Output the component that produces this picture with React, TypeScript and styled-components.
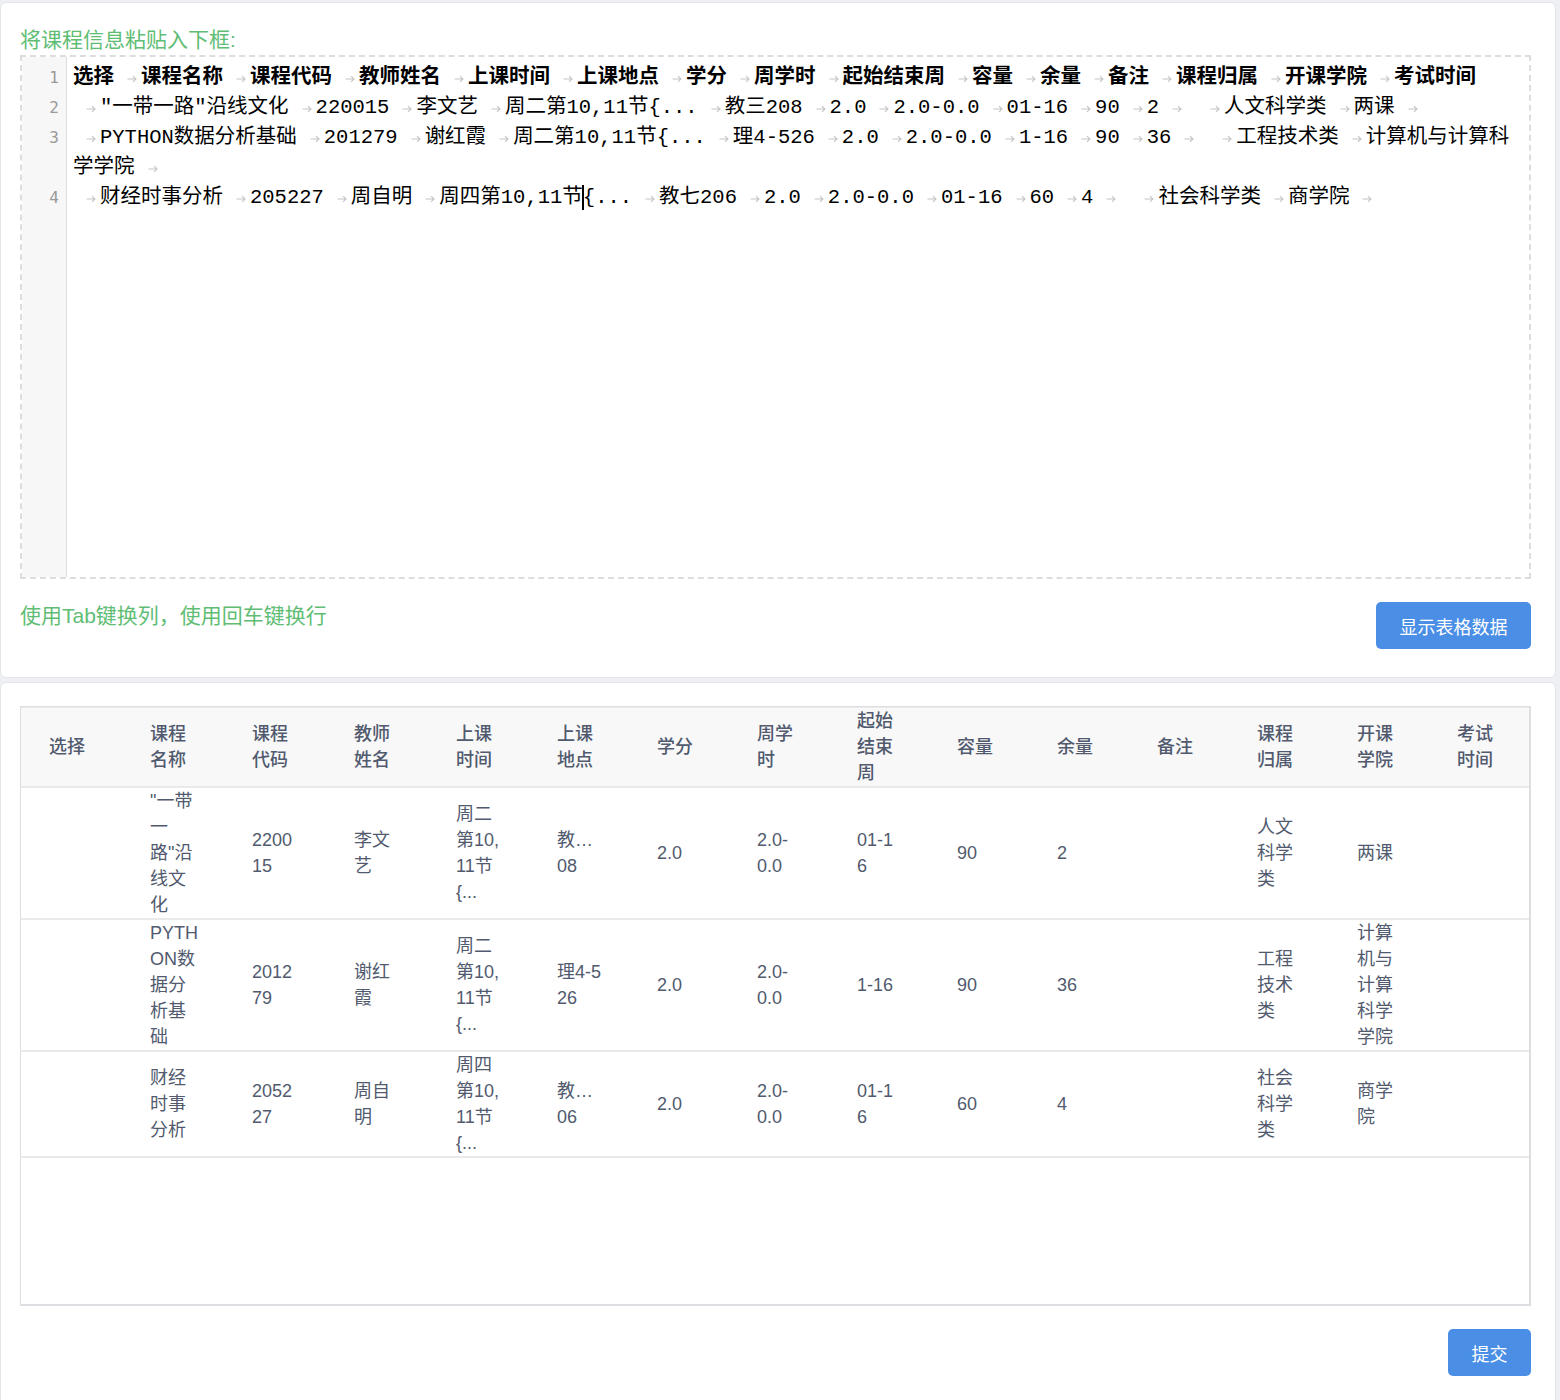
import React from "react";
import styled, { createGlobalStyle } from "styled-components";

const Global = createGlobalStyle`
  html, body { margin: 0; padding: 0; background: #eef0f3; }
  body { font-family: "Liberation Sans", "Noto Sans CJK SC", sans-serif; }
  * { box-sizing: border-box; }
`;

const Page = styled.div`
  padding: 2px 4px 0 0;
  display: flex;
  flex-direction: column;
  gap: 4px;
`;

const Card = styled.section`
  background: #fff;
  border: 1px solid #e4e6ea;
  border-radius: 6px;
  padding: 23px 24px 28px 19px;
`;

const Hint = styled.div`
  color: #5fbd74;
  font-size: 21px;
  line-height: 24px;
  font-family: "Liberation Sans", "Noto Sans CJK SC", sans-serif;
`;

const Label = styled(Hint)`
  margin-top: 2px;
  margin-bottom: 3px;
`;

const Editor = styled.div`
  height: 524px;
  border: 2px dashed #dddddd;
  display: flex;
  overflow: hidden;
`;

const Gutter = styled.div`
  width: 45px;
  flex: none;
  background: #f7f7f7;
  border-right: 1px solid #dddddd;
  padding-top: 6px;
`;

const LineNo = styled.div<{ $rows: number }>`
  height: ${(p) => p.$rows * 30}px;
  line-height: 30px;
  text-align: right;
  padding-right: 7px;
  color: #999;
  font-family: "DejaVu Sans Mono", monospace;
  font-size: 16px;
`;

const Code = styled.div`
  flex: 1;
  padding: 6px 0 0 6px;
  font-family: "Liberation Mono", "Noto Sans CJK SC", monospace;
  font-size: 20.5px;
  color: #000;
`;

const Row = styled.div<{ $bold?: boolean }>`
  height: 30px;
  line-height: 30px;
  white-space: pre;
  font-weight: ${(p) => (p.$bold ? 700 : 400)};
`;

const Tab = styled.span<{ $w: number }>`
  display: inline-flex;
  justify-content: flex-end;
  align-items: center;
  width: ${(p) => p.$w}px;
  height: 30px;
  padding: 2px 4px 0 0;
  vertical-align: top;
  color: #c4c4c4;
`;

const Caret = styled.span`
  display: inline-block;
  width: 2px;
  height: 25px;
  background: #000;
  vertical-align: middle;
  margin: 0 -1px 0 -1px;
`;

const Footer = styled.div<{ $between?: boolean }>`
  margin-top: 23px;
  display: flex;
  justify-content: ${(p) => (p.$between ? "space-between" : "flex-end")};
  align-items: flex-start;
`;

const HelpText = styled(Hint)`
  line-height: 28px;
`;

const Button = styled.button<{ $w: number }>`
  width: ${(p) => p.$w}px;
  height: 47px;
  border: none;
  border-radius: 5px;
  background: #4a8ee6;
  color: #fff;
  font-size: 18px;
  font-family: "Liberation Sans", "Noto Sans CJK SC", sans-serif;
  cursor: pointer;
`;

const TableBox = styled.div`
  height: 600px;
  border: 1px solid #dcdee2;
  border-width: 1px 2px 2px 1px;
  overflow: hidden;
`;

const Table = styled.table`
  width: 100%;
  border-collapse: collapse;
  table-layout: fixed;
  font-family: "Liberation Sans", "Noto Sans CJK SC", sans-serif;
  font-size: 18px;
  line-height: 26px;
  color: #515a6e;
`;

const Col = styled.col<{ $w: number }>`
  width: ${(p) => p.$w}px;
`;

const Th = styled.th`
  background: #f8f8f9;
  height: 79px;
  padding: 0 6px 0 28px;
  text-align: left;
  vertical-align: middle;
  font-weight: 500;
  white-space: nowrap;
  border-top: 1px solid #e8eaec;
  border-bottom: 2px solid #e8eaec;
`;

const Td = styled.td`
  padding: 0 6px 0 28px;
  vertical-align: middle;
  white-space: nowrap;
  border-bottom: 2px solid #e8eaec;
`;

function TabArrow() {
  return (
    <svg width="10" height="8" viewBox="0 0 10 8" fill="none" stroke="currentColor" strokeWidth="1.1">
      <path d="M0.5 4H9M6 1.2L9 4L6 6.8" />
    </svg>
  );
}

type Line = { rows: string[]; bold?: boolean };

const lines: Line[] = [
  {
    bold: true,
    rows: [
      "选择\t课程名称\t课程代码\t教师姓名\t上课时间\t上课地点\t学分\t周学时\t起始结束周\t容量\t余量\t备注\t课程归属\t开课学院\t考试时间",
    ],
  },
  {
    rows: [
      '\t"一带一路"沿线文化\t220015\t李文艺\t周二第10,11节{...\t教三208\t2.0\t2.0-0.0\t01-16\t90\t2\t\t人文科学类\t两课\t',
    ],
  },
  {
    rows: [
      "\tPYTHON数据分析基础\t201279\t谢红霞\t周二第10,11节{...\t理4-526\t2.0\t2.0-0.0\t1-16\t90\t36\t\t工程技术类\t计算机与计算科",
      "学学院\t",
    ],
  },
  {
    rows: [
      "\t财经时事分析\t205227\t周自明\t周四第10,11节|{...\t教七206\t2.0\t2.0-0.0\t01-16\t60\t4\t\t社会科学类\t商学院\t",
    ],
  },
];

function renderRow(text: string) {
  const parts = text.split("\t");
  const out: React.ReactNode[] = [];
  parts.forEach((seg, i) => {
    if (i > 0) {
      const prevEmpty = parts[i - 1] === "" && i - 1 > 0;
      out.push(
        <Tab key={`t${i}`} $w={prevEmpty ? 38 : 27}>
          <TabArrow />
        </Tab>
      );
    }
    if (seg.includes("|")) {
      const [a, b] = seg.split("|");
      out.push(<React.Fragment key={`s${i}`}>{a}</React.Fragment>);
      out.push(<Caret key={`c${i}`} />);
      out.push(<React.Fragment key={`s2${i}`}>{b}</React.Fragment>);
    } else if (seg) {
      out.push(<React.Fragment key={`s${i}`}>{seg}</React.Fragment>);
    }
  });
  return out;
}

const colWidths = [101, 102, 102, 102, 101, 100, 100, 100, 100, 100, 100, 100, 100, 100, 100];

const headers: string[][] = [
  ["选择"],
  ["课程", "名称"],
  ["课程", "代码"],
  ["教师", "姓名"],
  ["上课", "时间"],
  ["上课", "地点"],
  ["学分"],
  ["周学", "时"],
  ["起始", "结束", "周"],
  ["容量"],
  ["余量"],
  ["备注"],
  ["课程", "归属"],
  ["开课", "学院"],
  ["考试", "时间"],
];

const data: string[][][] = [
  [
    [],
    ['"一带', "一", '路"沿', "线文", "化"],
    ["2200", "15"],
    ["李文", "艺"],
    ["周二", "第10,", "11节", "{..."],
    ["教…", "08"],
    ["2.0"],
    ["2.0-", "0.0"],
    ["01-1", "6"],
    ["90"],
    ["2"],
    [],
    ["人文", "科学", "类"],
    ["两课"],
    [],
  ],
  [
    [],
    ["PYTH", "ON数", "据分", "析基", "础"],
    ["2012", "79"],
    ["谢红", "霞"],
    ["周二", "第10,", "11节", "{..."],
    ["理4-5", "26"],
    ["2.0"],
    ["2.0-", "0.0"],
    ["1-16"],
    ["90"],
    ["36"],
    [],
    ["工程", "技术", "类"],
    ["计算", "机与", "计算", "科学", "学院"],
    [],
  ],
  [
    [],
    ["财经", "时事", "分析"],
    ["2052", "27"],
    ["周自", "明"],
    ["周四", "第10,", "11节", "{..."],
    ["教…", "06"],
    ["2.0"],
    ["2.0-", "0.0"],
    ["01-1", "6"],
    ["60"],
    ["4"],
    [],
    ["社会", "科学", "类"],
    ["商学", "院"],
    [],
  ],
];

function Lines({ items }: { items: string[] }) {
  return (
    <>
      {items.map((t, i) => (
        <React.Fragment key={i}>
          {i > 0 && <br />}
          {t}
        </React.Fragment>
      ))}
    </>
  );
}

export default function App() {
  return (
    <>
      <Global />
      <Page>
        <Card>
          <Label>将课程信息粘贴入下框:</Label>
          <Editor>
            <Gutter>
              {lines.map((l, i) => (
                <LineNo key={i} $rows={l.rows.length}>
                  {i + 1}
                </LineNo>
              ))}
            </Gutter>
            <Code>
              {lines.map((l, i) =>
                l.rows.map((r, j) => (
                  <Row key={`${i}-${j}`} $bold={l.bold}>
                    {renderRow(r)}
                  </Row>
                ))
              )}
            </Code>
          </Editor>
          <Footer $between>
            <HelpText>使用Tab键换列，使用回车键换行</HelpText>
            <Button $w={155}>显示表格数据</Button>
          </Footer>
        </Card>
        <Card>
          <TableBox>
            <Table>
              <colgroup>
                {colWidths.map((w, i) => (
                  <Col key={i} $w={w} />
                ))}
              </colgroup>
              <thead>
                <tr>
                  {headers.map((h, i) => (
                    <Th key={i}>
                      <Lines items={h} />
                    </Th>
                  ))}
                </tr>
              </thead>
              <tbody>
                {data.map((row, r) => (
                  <tr key={r}>
                    {row.map((c, i) => (
                      <Td key={i}>
                        <Lines items={c} />
                      </Td>
                    ))}
                  </tr>
                ))}
              </tbody>
            </Table>
          </TableBox>
          <Footer>
            <Button $w={83}>提交</Button>
          </Footer>
        </Card>
      </Page>
    </>
  );
}
